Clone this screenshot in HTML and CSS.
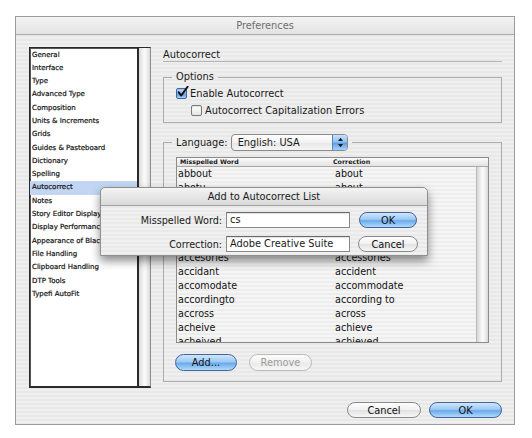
FILE: index.html
```html
<!DOCTYPE html>
<html>
<head>
<meta charset="utf-8">
<title>Preferences</title>
<link rel="stylesheet" href="styles.css">
</head>
<body>
<div class="window">
  <div class="titlebar">Preferences</div>
  <div class="content">
    <div class="main">
      <div class="sidebar">
        <ul class="catlist">
          <li>General</li>
          <li>Interface</li>
          <li>Type</li>
          <li>Advanced Type</li>
          <li>Composition</li>
          <li>Units &amp; Increments</li>
          <li>Grids</li>
          <li>Guides &amp; Pasteboard</li>
          <li>Dictionary</li>
          <li>Spelling</li>
          <li class="sel">Autocorrect</li>
          <li>Notes</li>
          <li>Story Editor Display</li>
          <li>Display Performance</li>
          <li>Appearance of Black</li>
          <li>File Handling</li>
          <li>Clipboard Handling</li>
          <li>DTP Tools</li>
          <li>Typefi AutoFit</li>
        </ul>
        <div class="vscroll"></div>
      </div>
      <div class="panel">
        <div class="panel-title">Autocorrect</div>
        <fieldset class="group options">
          <legend>Options</legend>
          <label class="check"><span class="box checked"><svg width="13" height="13" viewBox="0 0 13 13"><path d="M2.6 6.2 L5.2 9.6 L11.6 0.8" fill="none" stroke="#111" stroke-width="1.9" stroke-linecap="round" stroke-linejoin="round"/></svg></span>Enable Autocorrect</label>
          <label class="check sub"><span class="box"></span>Autocorrect Capitalization Errors</label>
        </fieldset>
        <fieldset class="group lang">
          <legend><span class="legend-inner"><span>Language:</span><span class="popup"><span class="popup-text">English: USA</span><span class="stepper"><svg width="15" height="17" viewBox="0 0 15 17"><path d="M5 7 L7.5 3.8 L10 7 Z" fill="#1a1a1a"/><path d="M5 10 L7.5 13.2 L10 10 Z" fill="#1a1a1a"/></svg></span></span></span></legend>
          <div class="table">
            <div class="thead"><span class="c1">Misspelled Word</span><span class="c2">Correction</span></div>
            <div class="tbody">
              <div class="rows">
                <div class="row"><span class="c1">abbout</span><span class="c2">about</span></div>
                <div class="row"><span class="c1">abotu</span><span class="c2">about</span></div>
                <div class="row"><span class="c1">abouta</span><span class="c2">about a</span></div>
                <div class="row"><span class="c1">aboutit</span><span class="c2">about it</span></div>
                <div class="row"><span class="c1">aboutthe</span><span class="c2">about the</span></div>
                <div class="row"><span class="c1">abscence</span><span class="c2">absence</span></div>
                <div class="row"><span class="c1">accesories</span><span class="c2">accessories</span></div>
                <div class="row"><span class="c1">accidant</span><span class="c2">accident</span></div>
                <div class="row"><span class="c1">accomodate</span><span class="c2">accommodate</span></div>
                <div class="row"><span class="c1">accordingto</span><span class="c2">according to</span></div>
                <div class="row"><span class="c1">accross</span><span class="c2">across</span></div>
                <div class="row"><span class="c1">acheive</span><span class="c2">achieve</span></div>
                <div class="row"><span class="c1">acheived</span><span class="c2">achieved</span></div>
              </div>
              <div class="tscroll"></div>
            </div>
          </div>
          <div class="btnrow">
            <button class="btn default add">Add...</button>
            <button class="btn disabled remove">Remove</button>
          </div>
        </fieldset>
      </div>
    </div>
    <div class="footer">
      <button class="btn cancel">Cancel</button>
      <button class="btn default ok">OK</button>
    </div>
  </div>

  <div class="dialog">
    <div class="dialog-title">Add to Autocorrect List</div>
    <div class="dialog-body">
      <div class="drow">
        <span class="dlabel">Misspelled Word:</span>
        <span class="field">cs</span>
        <button class="btn default dbtn">OK</button>
      </div>
      <div class="drow">
        <span class="dlabel">Correction:</span>
        <span class="field">Adobe Creative Suite</span>
        <button class="btn dbtn cancel2">Cancel</button>
      </div>
    </div>
  </div>
</div>
</body>
</html>
```

FILE: styles.css
```css
* { box-sizing: border-box; }

html, body {
  margin: 0;
  padding: 0;
  background: #ffffff;
}

body {
  font-family: "DejaVu Sans", "Liberation Sans", sans-serif;
  color: #1a1a1a;
}

.window {
  position: relative;
  margin: 16px 0 0 15px;
  width: 500px;
  height: 409px;
  border: 1px solid #9b9b9b;
  background: repeating-linear-gradient(to bottom, #efefef 0, #efefef 2px, #e8e8e8 2px, #e8e8e8 4px);
}

.titlebar {
  height: 18px;
  border-bottom: 1px solid #a9a9a9;
  text-align: center;
  font-size: 9.8px;
  line-height: 17px;
  color: #6e6e6e;
  background: linear-gradient(#f3f3f3, #e3e3e3);
}

.content {
  padding: 12px 12px 0 13px;
}

.main {
  display: flex;
  gap: 12px;
  height: 341px;
}

/* ---------- sidebar list ---------- */
.sidebar {
  width: 122px;
  display: flex;
  border: 1px solid #2a2a2a;
  border-right-color: #8d8d8d;
  border-bottom-width: 2px;
}

.catlist {
  list-style: none;
  margin: 0;
  padding: 0.5px 0 0;
  width: 109px;
  background: #ffffff;
  border-right: 2px solid #2a2a2a;
  box-shadow: inset 1px 1px 0 #555;
  font-size: 7px;
  line-height: 13.3px;
}

.catlist li {
  padding-left: 2px;
  white-space: nowrap;
  overflow: hidden;
  color: #111;
  -webkit-text-stroke: 0.2px #111;
}

.catlist li.sel {
  background: #c2d6f3;
}

.vscroll {
  flex: 1;
  background: linear-gradient(to right, #dadada, #f8f8f8 45%, #f8f8f8 60%, #d9d9d9);
}

/* ---------- right panel ---------- */
.panel {
  flex: 1;
  display: flex;
  flex-direction: column;
}

.panel-title {
  font-size: 9.8px;
  line-height: 13px;
  padding-top: 1px;
  border-bottom: 1px solid #b3b3b3;
}

.group {
  margin: 0;
  border: 1px solid #ababab;
  padding: 0 12px;
  min-width: 0;
}

.group legend {
  padding: 0 4px;
  margin-left: -4px;
  font-size: 9.8px;
  line-height: 12px;
}

.group.options {
  margin-top: 9px;
  padding-bottom: 5px;
}

.check {
  display: flex;
  align-items: center;
  gap: 3px;
  height: 14px;
  margin-top: 3px;
  font-size: 9.8px;
}

.check.sub {
  margin-left: 15px;
}

.box {
  position: relative;
  width: 11px;
  height: 11px;
  border: 1px solid #7a7a7a;
  border-radius: 2px;
  background: linear-gradient(#ffffff, #e4e4e4);
  box-shadow: inset 0 1px 1px rgba(0,0,0,0.12);
}

.box.checked {
  border-color: #3c6aa8;
  background: linear-gradient(#c4dffa 0%, #8ebdf0 45%, #5d9de4 55%, #a9d3fb 100%);
}

.box svg {
  position: absolute;
  left: -1px;
  top: -3px;
}

.group.lang {
  margin-top: 11px;
  padding-bottom: 10px;
}

.group.lang legend {
  line-height: 17px;
}

.legend-inner {
  display: flex;
  align-items: center;
  gap: 3px;
  height: 17px;
}

.popup {
  display: flex;
  width: 117px;
  height: 17px;
  border: 1px solid #8a8a8a;
  border-radius: 4px;
  background: linear-gradient(#ffffff, #f2f2f2 50%, #e6e6e6 51%, #f6f6f6);
  overflow: hidden;
}

.popup-text {
  flex: 1;
  padding-left: 6px;
  font-size: 9.8px;
  line-height: 15px;
}

.stepper {
  width: 15px;
  border-left: 1px solid #5a84bd;
  background: linear-gradient(#c7e1fb 0%, #93c2f2 45%, #5f9fe6 55%, #a6d4fb 100%);
}

.stepper svg {
  display: block;
  margin-top: -1px;
}

/* ---------- table ---------- */
.table {
  margin-top: 6px;
  height: 186px;
  border: 1px solid #8c8c8c;
  display: flex;
  flex-direction: column;
}

.thead {
  display: flex;
  height: 9px;
  border-bottom: 1px solid #a7a7a7;
  background: linear-gradient(#fbfbfb, #e3e3e3);
  font-size: 6.3px;
  font-weight: bold;
  line-height: 8px;
}

.thead .c1 {
  width: 156px;
  padding-left: 3px;
}

.tbody {
  flex: 1;
  display: flex;
  min-height: 0;
}

.rows {
  flex: 1;
  overflow: hidden;
  background: repeating-linear-gradient(to bottom, #f5f5f5 0, #f5f5f5 2px, #ededed 2px, #ededed 4px);
}

.row {
  display: flex;
  height: 14px;
  font-size: 9.6px;
  line-height: 14px;
  color: #111;
}

.row .c1 {
  width: 156px;
  padding-left: 1px;
}

.row .c2 {
  padding-left: 2px;
}

.tscroll {
  width: 12px;
  border-left: 1px solid #b9b9b9;
  background: linear-gradient(to right, #d6d6d6, #f9f9f9 45%, #f9f9f9 60%, #d8d8d8);
}

/* ---------- buttons ---------- */
.btn {
  font-family: "DejaVu Sans", "Liberation Sans", sans-serif;
  font-size: 9.8px;
  color: #111;
  height: 17px;
  padding: 0;
  border: 1px solid #8a8a8a;
  border-radius: 9px;
  background: linear-gradient(#fefefe 0%, #f1f1f1 48%, #e2e2e2 52%, #f7f7f7 100%);
  line-height: 14px;
}

.btn.default {
  border-color: #46639a;
  background: linear-gradient(#cfe6fc 0%, #9ccaf4 45%, #6aaaea 55%, #b0dafc 100%);
}

.btn.disabled {
  color: #9c9c9c;
  border-color: #b9b9b9;
  background: linear-gradient(#fdfdfd, #f0f0f0 50%, #e9e9e9 52%, #f7f7f7);
}

.btnrow {
  display: flex;
  gap: 12px;
  margin-top: 11px;
  margin-left: -1px;
}

.add { width: 62px; }
.remove { width: 63px; }

.footer {
  display: flex;
  justify-content: flex-end;
  gap: 8px;
  margin-top: 14px;
}

.footer .btn { height: 16px; line-height: 13px; }
.cancel { width: 74px; }
.ok { width: 73px; }

/* ---------- dialog (sheet over content) ---------- */
.dialog {
  position: absolute;
  left: 84px;
  top: 170px;
  width: 328px;
  height: 69px;
  border: 1px solid #8f8f8f;
  border-radius: 5px 5px 0 0;
  box-shadow: 0 5px 10px rgba(0,0,0,0.45);
  background: repeating-linear-gradient(to bottom, #f0f0f0 0, #f0f0f0 2px, #e9e9e9 2px, #e9e9e9 4px);
}

.dialog-title {
  height: 18px;
  border-bottom: 1px solid #a2a2a2;
  border-radius: 5px 5px 0 0;
  background: linear-gradient(#f4f4f4, #d9d9d9);
  text-align: center;
  font-size: 9.8px;
  line-height: 17px;
  color: #1a1a1a;
}

.dialog-body {
  padding-top: 6px;
  display: flex;
  flex-direction: column;
  gap: 8px;
}

.drow {
  display: flex;
  align-items: center;
  height: 16px;
}

.dlabel {
  width: 121px;
  text-align: right;
  font-size: 9.6px;
}

.field {
  margin-left: 4px;
  width: 124px;
  height: 16px;
  border: 1px solid #8a8a8a;
  border-top-color: #6a6a6a;
  background: #ffffff;
  box-shadow: inset 0 1px 1px rgba(0,0,0,0.12);
  font-size: 9.8px;
  line-height: 14px;
  padding-left: 3px;
  white-space: nowrap;
  overflow: hidden;
}

.dbtn {
  margin-left: 9px;
  width: 58px;
  height: 16px;
  line-height: 13px;
}

.cancel2 {
  width: 60px;
  margin-left: 8px;
}
```
